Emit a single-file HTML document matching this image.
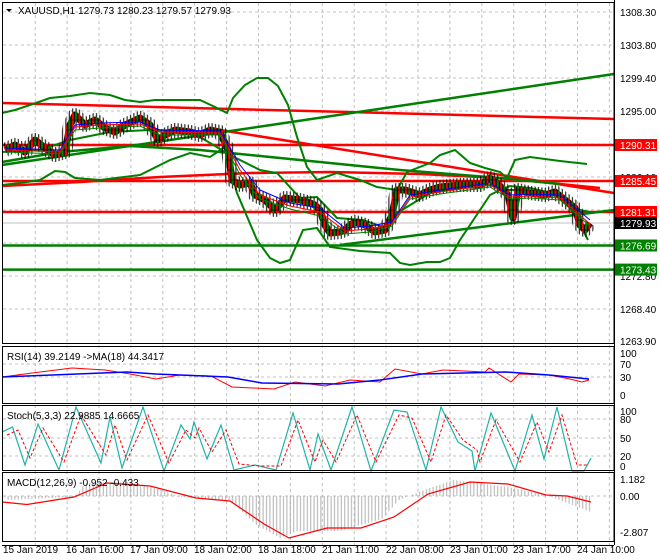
<!DOCTYPE html>
<html><head><meta charset="utf-8">
<style>
html,body{margin:0;padding:0;background:#fff;width:660px;height:560px;overflow:hidden}
svg{display:block;font-family:"Liberation Sans",sans-serif;font-size:10px}
</style></head>
<body>
<svg width="660" height="560" xmlns="http://www.w3.org/2000/svg">
<defs>
<pattern id="wick" x="3" y="0" width="3.4" height="10" patternUnits="userSpaceOnUse"><rect x="1.2" y="0" width="1" height="10" fill="#000"/></pattern>
<pattern id="body" x="3" y="0" width="6.8" height="10" patternUnits="userSpaceOnUse"><rect x="0.3" y="0" width="2.8" height="10" fill="#ff0000" stroke="#000" stroke-width="0.6"/><rect x="3.7" y="0" width="2.8" height="10" fill="#008000" stroke="#000" stroke-width="0.6"/></pattern>
<pattern id="hist" x="3" y="0" width="3.4" height="10" patternUnits="userSpaceOnUse"><rect x="1.2" y="0" width="1" height="10" fill="#b0b0b0"/></pattern>
</defs>
<g stroke="#c0c0c0" stroke-width="1" stroke-dasharray="3,3" fill="none">
<path d="M35.2 3V545M67.1 3V545M99 3V545M130.9 3V545M162.8 3V545M194.7 3V545M226.6 3V545M258.5 3V545M290.4 3V545M322.3 3V545M354.2 3V545M386.1 3V545M418 3V545M449.9 3V545M481.8 3V545M513.7 3V545M545.6 3V545M577.5 3V545M609.4 3V545"/>
<path d="M3 12H614M3 45H614M3 78H614M3 111H614M3 144H614M3 177H614M3 210H614M3 243H614M3 276H614M3 309H614M3 364H614M3 377H614M3 419H614M3 438H614M3 456H614M3 496H614"/>
</g>
<rect x="2" y="347" width="612" height="56" fill="none"/>
<line x1="3" y1="223" x2="614" y2="223" stroke="#c0c0c0"/>
<g fill="none" stroke-width="2.5">
<line x1="2" y1="103" x2="614" y2="119" stroke="#ff0000"/>
<line x1="2" y1="145" x2="614" y2="145" stroke="#ff0000"/>
<line x1="2" y1="181" x2="614" y2="181" stroke="#ff0000"/>
<line x1="2" y1="212" x2="614" y2="212" stroke="#ff0000"/>
<line x1="220" y1="130" x2="614" y2="193" stroke="#ff0000"/>
<polyline stroke="#ff0000" points="2,186 80,182 160,177 250,173 330,172 420,174 500,178 560,184 600,188"/>
<line x1="2" y1="165" x2="614" y2="74" stroke="#008000"/>
<polyline stroke="#008000" points="2,162 60,152 130,146 200,150 300,160 400,170 500,178 560,184"/>
<line x1="340" y1="245" x2="614" y2="210" stroke="#008000"/>
<line x1="2" y1="245.5" x2="614" y2="245.5" stroke="#008000"/>
<line x1="2" y1="269.6" x2="614" y2="269.6" stroke="#008000"/>
</g>
<g fill="none" stroke="#008000" stroke-width="2">
<polyline points="2,113 15,110 30,105 50,98 70,96 90,93 110,95 125,100 140,102 155,100 175,100 200,100 215,107 227,113 233,98 245,85 257,78 268,78 278,86 288,105 297,137 307,167 317,180 337,173 360,180 377,187 397,190 407,172 430,163 440,155 455,150 470,163 485,168 500,172 507,178 515,160 530,157 560,161 587,164"/>
<polyline points="2,185 20,183 40,180 55,171 65,172 75,178 100,180 140,175 170,160 190,153 210,157 225,147 237,193 257,240 270,258 280,263 290,260 303,230 317,228 330,247 360,251 390,253 400,263 410,265 427,262 440,262 450,258 460,240 470,225 480,210 490,195 500,190 510,186 530,188 560,195 575,215 588,240"/>
<polyline points="2,152 40,150 70,140 110,132 150,130 190,131 230,155 260,170 277,173 300,198 317,197 337,218 363,220 383,227 397,213 430,193 460,188 490,185 505,190 520,190 545,192 565,200 580,210 590,212"/>
</g>
<g fill="none" stroke-linejoin="round">
<polyline stroke="url(#wick)" stroke-width="14" points="5,150 15,145 25,152 35,140 45,148 55,155 65,152 70,125 75,115 85,125 95,120 105,128 115,132 125,125 140,118 150,125 158,140 165,135 175,130 190,132 200,135 210,130 220,132 228,150 232,180 240,185 250,183 255,195 265,200 275,210 285,198 300,200 310,203 315,205 320,210 325,225 330,233 340,232 345,230 350,225 355,222 365,225 375,232 385,230 392,215 397,190 405,190 420,195 430,190 440,187 460,185 480,185 490,178 500,186 508,195 513,218 518,190 530,193 545,195 555,192 565,200 575,208 580,225 585,230 590,223"/>
<polyline stroke="url(#body)" stroke-width="7" points="5,150 15,145 25,152 35,140 45,148 55,155 65,152 70,125 75,115 85,125 95,120 105,128 115,132 125,125 140,118 150,125 158,140 165,135 175,130 190,132 200,135 210,130 220,132 228,150 232,180 240,185 250,183 255,195 265,200 275,210 285,198 300,200 310,203 315,205 320,210 325,225 330,233 340,232 345,230 350,225 355,222 365,225 375,232 385,230 392,215 397,190 405,190 420,195 430,190 440,187 460,185 480,185 490,178 500,186 508,195 513,218 518,190 530,193 545,195 555,192 565,200 575,208 580,225 585,230 590,223"/>
<polyline stroke="#0000ff" stroke-width="1" points="5,148 60,150 75,125 100,123 140,122 160,130 220,131 240,165 260,190 290,203 320,208 345,228 370,226 392,222 410,195 440,190 490,183 510,195 530,194 560,195 590,220"/>
<polyline stroke="#ff0000" stroke-width="1" points="5,150 60,152 75,127 100,125 140,124 160,132 220,133 240,170 260,195 290,206 320,212 345,231 370,229 392,224 410,197 440,192 490,185 510,197 530,196 560,198 590,224"/>
<polyline stroke="#008000" stroke-width="1" points="5,152 60,154 75,130 100,128 140,126 160,135 220,135 240,175 260,199 290,209 320,216 345,234 370,232 392,226 410,199 440,194 490,187 510,199 530,198 560,200 590,226"/>
</g>
<g fill="none">
<polyline stroke="#ff0000" stroke-width="1" points="2,377 40,372 72,368 105,370 130,374 156,379 180,375 211,376 232,387 274,389 295,382 325,386 350,380 380,382 395,369 422,374 443,370 485,372 489,368 511,382 519,374 549,375 570,379 582,382 589,380"/>
<polyline stroke="#0000ff" stroke-width="1.5" points="2,377 127,372 156,374 228,377 262,383 338,384 380,380 422,374 506,372 549,375 589,379"/>
<polyline stroke="#20b2aa" stroke-width="1.2" points="2,432 12.5,427 25,465 38,424 59,470 76,407 101,463 110,417 122,468 143,407 164,471 181,425 190,439 194,422 207,459 221,425 234,470 255,465 276,470 293,413 310,470 318,434 331,470 352,407 371,471 394,410 407,412 426,470 441,407 458,442 472,451 475,471 491,413 515,471 532,415 544,459 557,407 572,471 584,471 591,458"/>
<polyline stroke="#ff0000" stroke-width="1" stroke-dasharray="3,2" points="7,435 18,430 30,458 43,428 64,462 81,415 106,455 115,425 127,460 148,415 169,463 186,430 195,438 199,428 212,452 226,430 239,464 260,466 281,466 298,420 315,462 323,440 336,462 357,415 376,462 399,415 412,418 431,462 446,415 463,440 477,450 480,462 496,420 520,462 537,422 549,452 562,415 577,465 589,465"/>
<polygon fill="url(#hist)" points="4,496 6,500 74,497 86,483 129,482 162,490 179,497 230,500 255,524 280,538 297,531 340,531 382,519 399,500 424,490 453,480 508,487 546,495 591,512 591,496"/>
<polyline stroke="#ff0000" stroke-width="1.2" points="2,502 27,504.5 74,497 107,483 150,486 196,498 230,501 264,524 289,538 327,528 361,528 394,517 428,494 470,482 508,484 546,495 567,496 591,502"/>
</g>
<g fill="none" stroke="#000" stroke-width="1">
<rect x="2.5" y="2.5" width="611.5" height="341"/>
<rect x="2.5" y="346.5" width="611.5" height="57"/>
<rect x="2.5" y="405.5" width="611.5" height="65"/>
<rect x="2.5" y="472.5" width="611.5" height="69"/>
<line x1="614.5" y1="0" x2="614.5" y2="545"/>
<line x1="2" y1="545.5" x2="614" y2="545.5"/>
</g>
<g fill="#000">
<text x="620" y="16">1308.30</text><text x="620" y="49">1303.80</text><text x="620" y="82">1299.40</text><text x="620" y="115">1295.00</text><text x="620" y="181">1286.10</text><text x="620" y="280">1272.80</text><text x="620" y="313">1268.40</text><text x="620" y="345">1263.90</text>
</g>
<rect x="615" y="139" width="42" height="12" fill="#ff0000"/><text x="620" y="149" fill="#fff">1290.31</text>
<rect x="615" y="175" width="42" height="12" fill="#ff0000"/><text x="620" y="185" fill="#fff">1285.45</text>
<rect x="615" y="206" width="42" height="12" fill="#ff0000"/><text x="620" y="216" fill="#fff">1281.31</text>
<rect x="615" y="217" width="42" height="12" fill="#000"/><text x="620" y="227" fill="#fff">1279.93</text>
<rect x="615" y="239.5" width="42" height="12" fill="#008000"/><text x="620" y="249.5" fill="#fff">1276.69</text>
<rect x="615" y="263.6" width="42" height="12" fill="#008000"/><text x="620" y="273.6" fill="#fff">1273.43</text>
<g fill="#000">
<text x="620" y="357">100</text><text x="620" y="368">70</text><text x="620" y="381">30</text><text x="620" y="399">0</text>
<text x="620" y="415">100</text><text x="620" y="423">80</text><text x="620" y="442">50</text><text x="620" y="460">20</text><text x="620" y="470">0</text>
<text x="620" y="483">1.182</text><text x="620" y="500">0.00</text><text x="620" y="536">-2.807</text>
<polygon points="6,9 12,9 9,12"/>
<text x="18" y="14">XAUUSD,H1  1279.73 1280.23 1279.57 1279.93</text>
<text x="7" y="360">RSI(14) 39.2149  -&gt;MA(18) 44.3417</text>
<text x="7" y="419">Stoch(5,3,3) 22.9885 14.6665</text>
<text x="7" y="486">MACD(12,26,9) -0.952 -0.433</text>
<text x="3" y="553">15 Jan 2019</text><text x="66" y="553">16 Jan 16:00</text><text x="130" y="553">17 Jan 09:00</text><text x="194" y="553">18 Jan 02:00</text><text x="258" y="553">18 Jan 18:00</text><text x="322" y="553">21 Jan 11:00</text><text x="386" y="553">22 Jan 08:00</text><text x="450" y="553">23 Jan 01:00</text><text x="513" y="553">23 Jan 17:00</text><text x="577" y="553">24 Jan 10:00</text>
</g>
</svg>
</body></html>
